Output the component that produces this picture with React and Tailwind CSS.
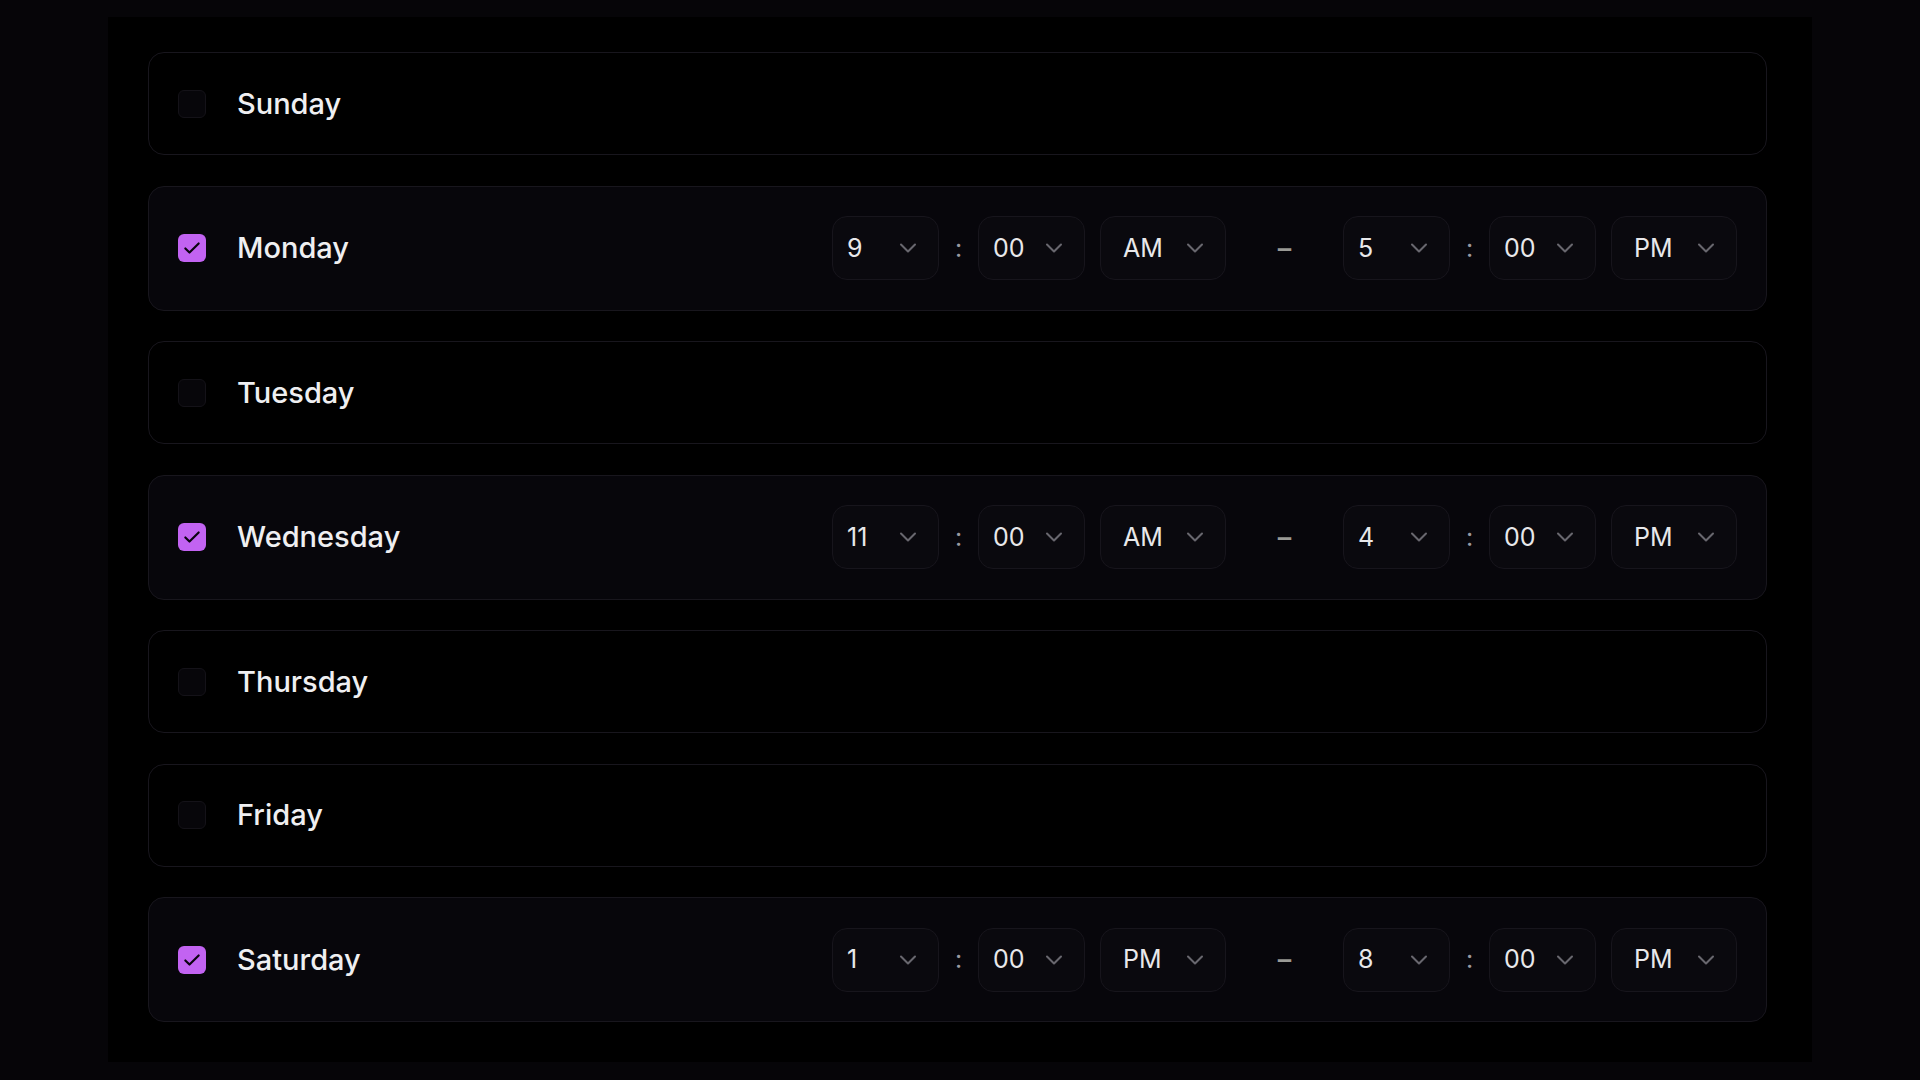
import { ChevronDown } from "lucide-react";

const days = [
  { name: "Sunday", on: false },
  { name: "Monday", on: true, from: ["9", "00", "AM"], to: ["5", "00", "PM"] },
  { name: "Tuesday", on: false },
  { name: "Wednesday", on: true, from: ["11", "00", "AM"], to: ["4", "00", "PM"] },
  { name: "Thursday", on: false },
  { name: "Friday", on: false },
  { name: "Saturday", on: true, from: ["1", "00", "PM"], to: ["8", "00", "PM"] },
];

function Select({ value, wide }) {
  return (
    <div
      className={`flex h-[64px] items-center justify-between rounded-[15px] border border-[#17151c] bg-[#0a090e] pr-[16px] ${
        wide ? "w-[126px] pl-[22px]" : "w-[107px] pl-[14px]"
      }`}
    >
      <span className="text-[25px] leading-none text-[#e8e8ea]">{value}</span>
      <ChevronDown size={28} strokeWidth={1.75} className="text-[#68676e]" />
    </div>
  );
}

function TimeGroup({ time }) {
  return (
    <div className="flex items-center">
      <Select value={time[0]} />
      <span className="w-[39px] text-center text-[25px] leading-none text-[#9a99a0]">:</span>
      <Select value={time[1]} />
      <div className="w-[15px]" />
      <Select value={time[2]} wide />
    </div>
  );
}

function Checkbox({ on }) {
  if (!on) {
    return <div className="h-[28px] w-[28px] shrink-0 rounded-[6px] border border-[#141218] bg-[#07060a]" />;
  }
  return (
    <div className="flex h-[28px] w-[28px] shrink-0 items-center justify-center rounded-[6px] bg-[#c263f2]">
      <svg width="20" height="20" viewBox="0 0 24 24" fill="none" stroke="#0a0410" strokeWidth="2.6" strokeLinecap="round" strokeLinejoin="round">
        <path d="M4 12.5l5 5L20 6.5" />
      </svg>
    </div>
  );
}

function DayRow({ day }) {
  return (
    <div
      className={`flex items-center rounded-[16px] border border-[#18161d] px-[29px] ${
        day.on ? "h-[125px] bg-[#07060b]" : "h-[103px] bg-black"
      }`}
    >
      <Checkbox on={day.on} />
      <span className="ml-[31px] text-[29px] font-medium text-[#efeff1]">{day.name}</span>
      {day.on && (
        <div className="ml-auto flex items-center">
          <TimeGroup time={day.from} />
          <span className="w-[117px] text-center text-[27px] font-semibold leading-none text-[#9a9a96]">–</span>
          <TimeGroup time={day.to} />
        </div>
      )}
    </div>
  );
}

export default function App() {
  return (
    <div
      className="min-h-screen w-full bg-[#060508] px-[108px] pt-[17px] pb-[17px]"
      style={{ fontFamily: "Inter, 'Noto Sans', sans-serif" }}
    >
      <div className="flex flex-col gap-[30.5px] bg-black pt-[35px] pb-[40px] pl-[40px] pr-[45px]">
        {days.map((d) => (
          <DayRow key={d.name} day={d} />
        ))}
      </div>
    </div>
  );
}
